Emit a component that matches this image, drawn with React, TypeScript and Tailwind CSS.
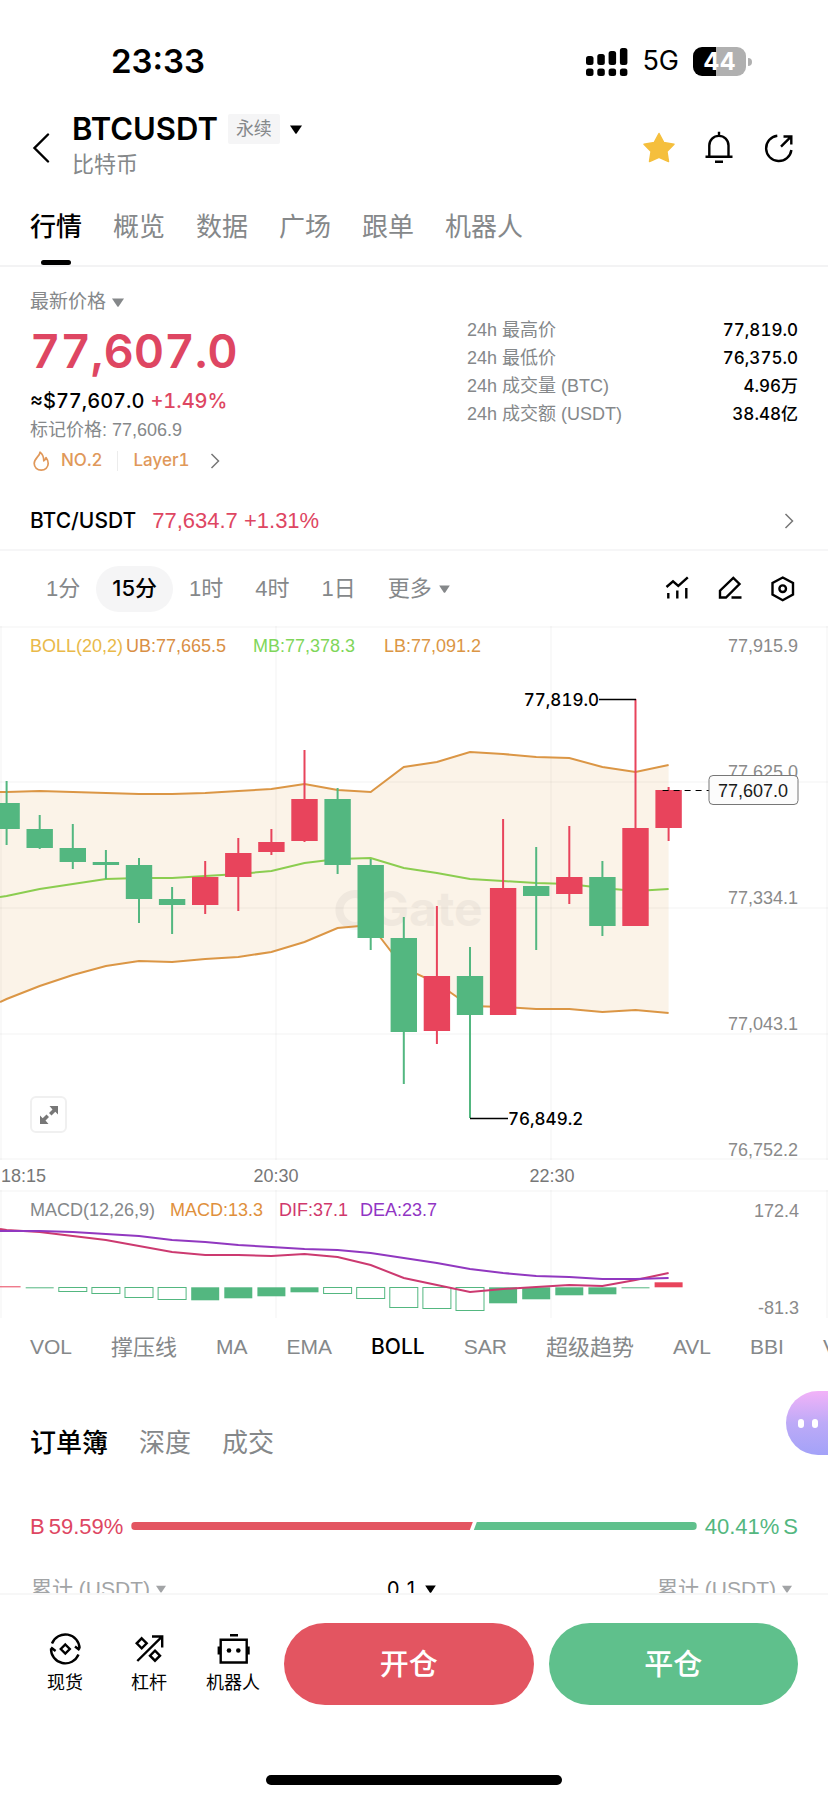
import type { ReactNode } from 'react'
import clsx from 'clsx'

const INTER = "font-[Inter,'Noto_Sans_CJK_SC',sans-serif]"

const UP = '#e8445c'
const DOWN = '#53b780'

const pageTabs = ['行情', '概览', '数据', '广场', '跟单', '机器人']

const stats = [
    { label: '24h 最高价', value: '77,819.0' },
    { label: '24h 最低价', value: '76,375.0' },
    { label: '24h 成交量 (BTC)', value: '4.96万' },
    { label: '24h 成交额 (USDT)', value: '38.48亿' },
]

const periods = ['1分', '15分', '1时', '4时', '1日']

const indicators = [
    'VOL',
    '撑压线',
    'MA',
    'EMA',
    'BOLL',
    'SAR',
    '超级趋势',
    'AVL',
    'BBI',
    'VWAP',
]

const bookTabs = ['订单簿', '深度', '成交']

// [high, body top, body bottom, low, rising]
const candles: [number, number, number, number, boolean][] = [
    [155, 177, 203, 219, false],
    [189, 203, 222, 223, false],
    [198, 222, 236, 243, false],
    [224, 236, 239, 253, false],
    [232, 239, 273, 297, false],
    [261, 273, 279, 308, false],
    [235, 251, 279, 288, true],
    [212, 227, 251, 285, true],
    [203, 216, 226, 229, true],
    [124, 173, 215, 216, true],
    [162, 173, 239, 248, false],
    [233, 239, 312, 324, false],
    [291, 312, 406, 458, false],
    [280, 350, 405, 418, true],
    [321, 350, 389, 492, false],
    [193, 262, 389, 389, true],
    [221, 260, 270, 324, false],
    [200, 251, 268, 278, true],
    [235, 251, 300, 310, false],
    [73, 202, 300, 300, true],
    [161, 164, 202, 215, true],
]

const upperBand = [
    166, 165, 166, 167, 168, 168, 167, 165, 163, 158, 164, 166, 141, 136, 126,
    128, 131, 132, 141, 146, 139,
]
const middleBand = [
    270, 263, 258, 253, 252, 252, 250, 248, 245, 237, 233, 232, 242, 247, 253,
    255, 257, 258, 262, 265, 263,
]
const lowerBand = [
    373, 360, 349, 340, 335, 336, 333, 331, 326, 316, 302, 299, 342, 357, 380,
    381, 383, 383, 386, 384, 387,
]

// [top, bottom, style]
const macdBars: [number, number, 'solid' | 'hollow' | 'up'][] = [
    [96, 97, 'up'],
    [97, 98, 'solid'],
    [97, 101, 'hollow'],
    [97, 103, 'hollow'],
    [97, 107, 'hollow'],
    [97, 109, 'hollow'],
    [97, 110, 'solid'],
    [97, 108, 'solid'],
    [97, 106, 'solid'],
    [97, 102, 'solid'],
    [97, 103, 'hollow'],
    [97, 108, 'hollow'],
    [97, 117, 'hollow'],
    [97, 118, 'hollow'],
    [97, 120, 'hollow'],
    [97, 113, 'solid'],
    [97, 109, 'solid'],
    [97, 105, 'solid'],
    [97, 104, 'solid'],
    [97, 98, 'solid'],
    [92, 97, 'up'],
]
const dif = [
    40, 42, 46, 50, 56, 62, 65, 65, 66, 64, 67, 75, 88, 95, 102, 99, 97, 95, 96,
    90, 83,
]
const dea = [
    41, 41, 42, 44, 46, 50, 52, 55, 57, 59, 60, 63, 68, 73, 79, 83, 86, 87, 89,
    89, 88,
]

const slotX = (i: number) => 6.6 + i * 33.1

const toPoints = (values: number[], start: number) =>
    [`0,${start}`, ...values.map((y, i) => `${slotX(i)},${y}`)].join(' ')

function Caret({ className }: { className: string }) {
    return (
        <svg viewBox="0 0 12 9" className={className} aria-hidden="true">
            <path d="M0 .5h12L6.8 8.3q-.8 1-1.6 0Z" fill="currentColor" />
        </svg>
    )
}

function ChevronRight({ className }: { className: string }) {
    return (
        <svg
            viewBox="0 0 10 16"
            fill="none"
            stroke="currentColor"
            strokeWidth="1.5"
            className={className}
            aria-hidden="true"
        >
            <path d="M1.5 1 8.5 8l-7 7" />
        </svg>
    )
}

function LineIcon({ size, children }: { size: 28 | 36; children: ReactNode }) {
    return (
        <svg
            viewBox={`0 0 ${size} ${size}`}
            fill="none"
            stroke="currentColor"
            strokeWidth="2.4"
            className={size === 28 ? 'size-7' : 'size-9'}
            aria-hidden="true"
        >
            {children}
        </svg>
    )
}

function StatusBar() {
    return (
        <div
            className={clsx(
                INTER,
                'flex h-[104px] items-center justify-between pt-[19px] pr-[76px] pl-[111px]'
            )}
        >
            <span className="text-[33px] font-semibold">23:33</span>
            <div className="flex items-center gap-[14px]">
                <svg viewBox="0 0 42 28" className="h-7 w-[42px]">
                    {[8, 6, 3, 0].map((top, i) => (
                        <g key={top}>
                            <rect
                                x={i * 11.3}
                                y={top}
                                width="7.5"
                                height={17 - top}
                                rx="2.5"
                            />
                            <rect
                                x={i * 11.3}
                                y="20.5"
                                width="7.5"
                                height="7.5"
                                rx="2.5"
                            />
                        </g>
                    ))}
                </svg>
                <span className="text-[27px]">5G</span>
                <div className="flex items-center gap-[2px]">
                    <div className="flex h-[29px] w-[53px] items-center justify-center rounded-[9px] bg-linear-to-r from-black from-44% to-[#b0b0b0] to-44% text-2xl font-bold text-white">
                        44
                    </div>
                    <div className="h-2 w-1 rounded-r-full bg-[#b0b0b0]" />
                </div>
            </div>
        </div>
    )
}

function Header() {
    return (
        <header className="flex h-[88px] items-center px-[30px]">
            <button aria-label="返回" className="w-[42px]">
                <svg
                    viewBox="0 0 20 30"
                    fill="none"
                    stroke="currentColor"
                    strokeWidth="2.4"
                    strokeLinecap="round"
                    className="h-[30px] w-5"
                >
                    <path d="M18 1.5 4.5 15 18 28.5" />
                </svg>
            </button>
            <div className="flex-1 pb-[2px]">
                <div className="flex h-9 items-center gap-[10px]">
                    <h1
                        className={clsx(
                            INTER,
                            'text-[31px] leading-9 font-semibold'
                        )}
                    >
                        BTCUSDT
                    </h1>
                    <span className="rounded-xs bg-[#f5f5f6] px-2 text-lg leading-[30px] text-[#85888a]">
                        永续
                    </span>
                    <button aria-label="切换合约">
                        <Caret className="h-[9px] w-3" />
                    </button>
                </div>
                <p className="text-[22px] leading-9 text-[#85888a]">比特币</p>
            </div>
            <div className="flex gap-6">
                <button aria-label="自选">
                    <svg viewBox="0 0 36 36" className="size-9">
                        <path
                            d="M17 3.5 21.7 12.4 32 14.2 24.9 21.4 26.5 31.5 17 27.2 7.5 31.5 9.1 21.4 2 14.2 12.3 12.4Z"
                            fill="#f5bf3d"
                            stroke="#f5bf3d"
                            strokeWidth="1.5"
                            strokeLinejoin="round"
                        />
                    </svg>
                </button>
                <button aria-label="提醒">
                    <LineIcon size={36}>
                        <path d="M7.3 26.5V15.5a9.6 9.6 0 0 1 19.2 0v11M3.5 26.7h27M17 1.7V6M13 31.7h8" />
                    </LineIcon>
                </button>
                <button aria-label="分享">
                    <LineIcon size={36}>
                        <path d="M15.3 5.7A12.7 12.7 0 1 0 29.4 20M19 16.7 29 6.7M21.5 6.5h7.8v8" />
                    </LineIcon>
                </button>
            </div>
        </header>
    )
}

function PageTabs() {
    return (
        <nav className="flex gap-[31px] border-b-2 border-[#f3f3f4] px-[30px]">
            {pageTabs.map((tab, i) => (
                <button
                    key={tab}
                    className={clsx(
                        'relative h-[73px] pb-[3px] text-[26px]',
                        i === 0 ? 'font-medium text-black' : 'text-[#85888a]'
                    )}
                >
                    {tab}
                    {i === 0 && (
                        <span className="absolute bottom-0 left-1/2 h-[5px] w-[30px] -translate-x-1/2 rounded-full bg-black" />
                    )}
                </button>
            ))}
        </nav>
    )
}

function PriceSummary() {
    return (
        <section className="flex justify-between px-[30px] pt-[21px]">
            <div className="tabular-nums">
                <button className="flex h-7 items-center gap-[6px] text-[19px] text-[#85888a]">
                    最新价格
                    <Caret className="h-[9px] w-3" />
                </button>
                <p
                    className={clsx(
                        INTER,
                        'text-[47px] leading-[70px] font-semibold text-[#de4662]'
                    )}
                >
                    77,607.0
                </p>
                <p
                    className={clsx(
                        INTER,
                        'flex gap-[6px] text-xl leading-[30px] font-medium'
                    )}
                >
                    <span>≈$77,607.0</span>
                    <span className="text-[#de4662]">+1.49%</span>
                </p>
                <p className="text-lg leading-7 text-[#85888a]">
                    标记价格: 77,606.9
                </p>
                <button
                    className={clsx(
                        INTER,
                        'flex h-[34px] items-center text-[17px] font-medium text-[#e0985a]'
                    )}
                >
                    <svg
                        viewBox="0 0 22 22"
                        fill="none"
                        stroke="currentColor"
                        strokeWidth="1.7"
                        strokeLinejoin="round"
                        className="mr-[9px] size-[22px]"
                    >
                        <path d="M10 2.2C10 6 4.2 8.2 4.2 13.6a7 6.6 0 0 0 14 0c0-2.200-.8-4.200-2.200-6-.3 1.600-1 2.600-2.200 3.200C13.800 7 12.600 4.200 10 2.200Z" />
                    </svg>
                    NO.2
                    <span className="mx-[15px] h-5 w-px bg-[#ececec]" />
                    Layer1
                    <ChevronRight className="ml-5 h-4 w-[10px] text-[#777]" />
                </button>
            </div>
            <dl className="w-[331px] pt-7 text-lg leading-7">
                {stats.map((stat) => (
                    <div key={stat.label} className="flex justify-between">
                        <dt className="text-[#85888a]">{stat.label}</dt>
                        <dd
                            className={clsx(
                                INTER,
                                'text-[17px] font-medium tabular-nums'
                            )}
                        >
                            {stat.value}
                        </dd>
                    </div>
                ))}
            </dl>
        </section>
    )
}

function SpotLink() {
    return (
        <a
            href="#spot"
            className="flex items-center border-b-2 border-[#f6f6f7] px-[30px] pt-[14px] text-[22px] leading-[57px]"
        >
            <span className={clsx(INTER, 'text-[21px] font-medium')}>
                BTC/USDT
            </span>
            <span className="ml-4 text-[#de4662]">77,634.7 +1.31%</span>
            <ChevronRight className="mr-1 ml-auto h-4 w-[10px] text-[#777]" />
        </a>
    )
}

function ChartToolbar() {
    return (
        <div className="flex h-[75px] items-center justify-between px-[30px]">
            <div className="flex text-[22px] text-[#85888a]">
                {periods.map((period) => (
                    <button
                        key={period}
                        className={clsx(
                            'h-[46px] rounded-full px-4',
                            period === '15分' && [
                                INTER,
                                'bg-[#f5f5f6] font-medium text-black',
                            ]
                        )}
                    >
                        {period}
                    </button>
                ))}
                <button className="flex items-center gap-[7px] px-4">
                    更多
                    <Caret className="h-2 w-[11px]" />
                </button>
            </div>
            <div className="flex gap-[25px]">
                <button aria-label="指标">
                    <LineIcon size={28}>
                        <path d="M2.500 12 9 6.300l5.300 4.700L23.800 2.300M4.300 18v5.500M13.300 15.500v8M22.300 13v10.500" />
                    </LineIcon>
                </button>
                <button aria-label="画线">
                    <LineIcon size={28}>
                        <path d="M3 22.500V15.700L16.300 3l6.200 6L9 22.500ZM14.500 22.500h10" />
                    </LineIcon>
                </button>
                <button aria-label="设置">
                    <LineIcon size={28}>
                        <path d="M12.700 2.500 23 8v11.500l-10.300 5.700L2.500 19.500V8Z" />
                        <circle cx="12.700" cy="13.700" r="3.300" />
                    </LineIcon>
                </button>
            </div>
        </div>
    )
}

function PriceChart() {
    const lastX = slotX(candles.length - 1)
    const band = [
        toPoints(upperBand, 166),
        ...lowerBand.map((y, i) => `${slotX(i)},${y}`).reverse(),
        '0,376',
    ].join(' ')

    return (
        <div className="relative">
            <svg viewBox="0 0 828 534" className="block w-full text-lg">
                <polygon points={band} fill="#fbf3e8" />
                <g stroke="#000" strokeOpacity="0.025" strokeWidth="2">
                    {[1, 156, 282, 408, 533].map((y) => (
                        <line key={y} x1="0" x2="828" y1={y} y2={y} />
                    ))}
                    {[1, 276, 551, 827].map((x) => (
                        <line key={x} x1={x} x2={x} y1="0" y2="534" />
                    ))}
                </g>

                {/* Watermark */}
                <g opacity="0.04">
                    <path
                        d="M366 272a16 16 0 1 0 0 24"
                        fill="none"
                        stroke="#000"
                        strokeWidth="8"
                    />
                    <text
                        x="373"
                        y="300"
                        className="font-[Inter,sans-serif] text-[48px] font-bold"
                    >
                        Gate
                    </text>
                </g>

                <g fill="none" strokeWidth="2">
                    <polyline
                        points={toPoints(upperBand, 166)}
                        stroke="#db9645"
                    />
                    <polyline
                        points={toPoints(middleBand, 271)}
                        stroke="#8bcd50"
                    />
                    <polyline
                        points={toPoints(lowerBand, 376)}
                        stroke="#db9645"
                    />
                </g>

                {candles.map(([high, top, bottom, low, rising], i) => (
                    <g key={i} fill={rising ? UP : DOWN}>
                        <rect
                            x={slotX(i) - 1}
                            y={high}
                            width="2"
                            height={low - high}
                        />
                        <rect
                            x={slotX(i) - 13.2}
                            y={top}
                            width="26.4"
                            height={bottom - top}
                        />
                    </g>
                ))}

                {/* Bollinger legend */}
                <text x="30" y="26" fill="#e9b949">
                    BOLL(20,2)
                </text>
                <text x="126" y="26" fill="#d98f45">
                    UB:77,665.5
                </text>
                <text x="253" y="26" fill="#7fd65a">
                    MB:77,378.3
                </text>
                <text x="384" y="26" fill="#db9645">
                    LB:77,091.2
                </text>

                {/* Price axis */}
                <g fill="#8a8a8a">
                    <text x="728" y="26">
                        77,915.9
                    </text>
                    <text x="728" y="152">
                        77,625.0
                    </text>
                    <text x="728" y="278">
                        77,334.1
                    </text>
                    <text x="728" y="404">
                        77,043.1
                    </text>
                    <text x="728" y="530">
                        76,752.2
                    </text>
                </g>

                {/* High and low of the visible range */}
                <g stroke="#000" strokeWidth="1.5">
                    <line x1="599" x2="636" y1="73.500" y2="73.500" />
                    <line x1="470" x2="508" y1="492.500" y2="492.500" />
                </g>
                <g className="font-[Inter,sans-serif] text-[17px] font-medium tabular-nums">
                    <text x="599" y="80" textAnchor="end">
                        77,819.0
                    </text>
                    <text x="508" y="499">
                        76,849.2
                    </text>
                </g>

                {/* Last price */}
                <line
                    x1={lastX - 6}
                    x2="709"
                    y1="164.500"
                    y2="164.500"
                    stroke="#000"
                    strokeWidth="1.2"
                    strokeDasharray="6 5"
                />
                <rect
                    x="709"
                    y="149.500"
                    width="89"
                    height="29"
                    rx="4"
                    fill="#fcfcfc"
                    stroke="#777"
                />
                <text x="753" y="171" textAnchor="middle" fill="#1a1a1a">
                    77,607.0
                </text>
            </svg>
            <button
                aria-label="全屏"
                className="absolute bottom-[27px] left-[30px] flex size-[37px] items-center justify-center rounded-md border-2 border-[#f0f0f0] bg-white"
            >
                <svg viewBox="0 0 18 18" className="size-[18px]" fill="#777">
                    <path d="M9.500 0H18v8.500L15.300 5.800 11.500 9.500 9 7l3.500-3.500ZM8.500 18H0V9.500l2.700 2.700L6.500 8.500 9 11l-3.500 3.500Z" />
                </svg>
            </button>
        </div>
    )
}

function MacdChart() {
    return (
        <svg viewBox="0 0 828 160" className="block w-full text-lg">
            <g fill="#777">
                <text x="1" y="22">
                    18:15
                </text>
                <text x="276" y="22" textAnchor="middle">
                    20:30
                </text>
                <text x="552" y="22" textAnchor="middle">
                    22:30
                </text>
            </g>

            <g transform="translate(0 30)">
                <g stroke="#000" strokeOpacity="0.025" strokeWidth="2">
                    <line x1="0" x2="828" y1="1" y2="1" />
                    {[1, 276, 551, 827].map((x) => (
                        <line key={x} x1={x} x2={x} y1="0" y2="128" />
                    ))}
                </g>

                <text x="30" y="26" fill="#85888a">
                    MACD(12,26,9)
                </text>
                <text x="170" y="26" fill="#e0903c">
                    MACD:13.3
                </text>
                <text x="279" y="26" fill="#d0386c">
                    DIF:37.1
                </text>
                <text x="360" y="26" fill="#9135c4">
                    DEA:23.7
                </text>
                <g fill="#8a8a8a" textAnchor="end">
                    <text x="799" y="27">
                        172.4
                    </text>
                    <text x="799" y="124">
                        -81.3
                    </text>
                </g>

                {macdBars.map(([top, bottom, kind], i) =>
                    kind === 'hollow' ? (
                        <rect
                            key={i}
                            x={slotX(i) - 14}
                            y={top + 0.5}
                            width="28"
                            height={bottom - top}
                            fill="#fff"
                            stroke={DOWN}
                        />
                    ) : (
                        <rect
                            key={i}
                            x={slotX(i) - 14}
                            y={top + 0.3}
                            width="28"
                            height={bottom - top}
                            fill={kind === 'up' ? UP : DOWN}
                        />
                    )
                )}

                <g fill="none" strokeWidth="2">
                    <polyline points={toPoints(dif, 39)} stroke="#cc3a70" />
                    <polyline points={toPoints(dea, 41)} stroke="#9138c0" />
                </g>
            </g>
        </svg>
    )
}

function IndicatorTabs() {
    return (
        <div className="flex h-[54px] items-center gap-[39px] overflow-hidden px-[30px] text-[#85888a]">
            {indicators.map((name) => (
                <button
                    key={name}
                    className={clsx(
                        'shrink-0',
                        /^[A-Z]/.test(name) ? 'text-[21px]' : 'text-[22px]',
                        name === 'BOLL' && [INTER, 'font-medium text-black']
                    )}
                >
                    {name}
                </button>
            ))}
        </div>
    )
}

function OrderBook() {
    return (
        <section className="relative pt-[34px]">
            <div className="flex h-[70px] gap-[31px] px-[30px] text-[26px]">
                {bookTabs.map((tab, i) => (
                    <button
                        key={tab}
                        className={
                            i === 0
                                ? 'font-medium text-black'
                                : 'text-[#85888a]'
                        }
                    >
                        {tab}
                    </button>
                ))}
            </div>

            {/* Buy / sell ratio */}
            <div className="flex h-24 items-center gap-2 px-[30px] text-[22px]">
                <span className="flex gap-1 text-[#de4662]">
                    <span>B</span>
                    <span>59.59%</span>
                </span>
                <div className="flex h-2 flex-1">
                    <div className="w-[60.4%] rounded-l-full bg-[#e35561] [clip-path:polygon(0_0,100%_0,calc(100%_-_3px)_100%,0_100%)]" />
                    <div className="flex-1 rounded-r-full bg-[#5fc08c] [clip-path:polygon(4px_0,100%_0,100%_100%,1px_100%)]" />
                </div>
                <span className="flex gap-1 text-[#53b780]">
                    <span>40.41%</span>
                    <span>S</span>
                </span>
            </div>

            <div className="flex items-center justify-between pr-9 pl-[31px] text-[21px] leading-[30px] text-[#a2a4a6]">
                <button className="flex items-center gap-[6px]">
                    累计 (USDT)
                    <Caret className="h-2 w-[10px]" />
                </button>
                <button
                    className={clsx(
                        INTER,
                        'flex items-center gap-[7px] text-xl text-black tabular-nums'
                    )}
                >
                    0.1
                    <Caret className="h-2 w-[11px]" />
                </button>
                <button className="flex items-center gap-[6px]">
                    累计 (USDT)
                    <Caret className="h-2 w-[10px]" />
                </button>
            </div>

            {/* Assistant bubble, docked to the screen edge */}
            <button
                aria-label="智能助手"
                className="absolute top-[17px] right-0 flex h-16 w-[42px] items-center gap-2 rounded-l-full bg-linear-to-b from-[#f2b2f8] via-[#bdaaf7] to-[#a3a2f8] pl-3"
            >
                <span className="h-[9px] w-[6px] rounded-full bg-white" />
                <span className="h-[9px] w-[6px] rounded-full bg-white" />
            </button>
        </section>
    )
}

function BottomBar() {
    return (
        <footer className="shrink-0 border-t-2 border-[#f7f7f7] pt-7 pb-[15px]">
            <div className="flex h-[82px] pr-[30px] pl-[23px]">
                <a
                    href="#spot"
                    className="flex w-[84px] flex-col items-center pt-2 text-lg leading-8"
                >
                    <LineIcon size={36}>
                        <path d="M5 12.500A14.300 14.300 0 0 1 32.600 17.500M32.600 19 28 15.500M31.500 23.500A14.300 14.300 0 0 1 4 17.500M4 16.500l4.600 3.500M18.300 13.500l4.500 4.500-4.500 4.500-4.500-4.500Z" />
                    </LineIcon>
                    现货
                </a>
                <a
                    href="#margin"
                    className="flex w-[84px] flex-col items-center pt-2 text-lg leading-8"
                >
                    <LineIcon size={36}>
                        <path d="M6.300 30 31 5.700M21 5.500h10.200v11M10.700 7.300l5 5-5 5-5-5ZM24 19.700l5 5-5 5-5-5Z" />
                    </LineIcon>
                    杠杆
                </a>
                <a
                    href="#bots"
                    className="mr-[9px] flex w-[84px] flex-col items-center pt-2 text-lg leading-8"
                >
                    <LineIcon size={36}>
                        <path d="M5.700 8.700h26v22.800h-26ZM15 4.300h8M3.800 15.500v8M33.500 15.500v8" />
                        <g fill="currentColor" stroke="none">
                            <circle cx="14" cy="19.500" r="2.300" />
                            <circle cx="23.300" cy="19.500" r="2.300" />
                        </g>
                    </LineIcon>
                    机器人
                </a>
                <div className="flex flex-1 gap-[15px] text-[29px] font-medium text-white">
                    <button className="flex-1 rounded-full bg-[#e35561] pt-[3px]">
                        开仓
                    </button>
                    <button className="flex-1 rounded-full bg-[#5fc08c] pt-[3px]">
                        平仓
                    </button>
                </div>
            </div>
            <div className="mx-auto mt-[70px] h-[10px] w-[296px] rounded-full bg-black" />
        </footer>
    )
}

export default function App() {
    return (
        <div className="flex h-screen flex-col bg-white font-['Liberation_Sans','Noto_Sans_CJK_SC',sans-serif] text-black">
            <main className="min-h-0 flex-1 overflow-y-auto [scrollbar-width:none]">
                <StatusBar />
                <Header />
                <PageTabs />
                <PriceSummary />
                <SpotLink />
                <ChartToolbar />
                <PriceChart />
                <MacdChart />
                <IndicatorTabs />
                <OrderBook />
            </main>
            <BottomBar />
        </div>
    )
}
